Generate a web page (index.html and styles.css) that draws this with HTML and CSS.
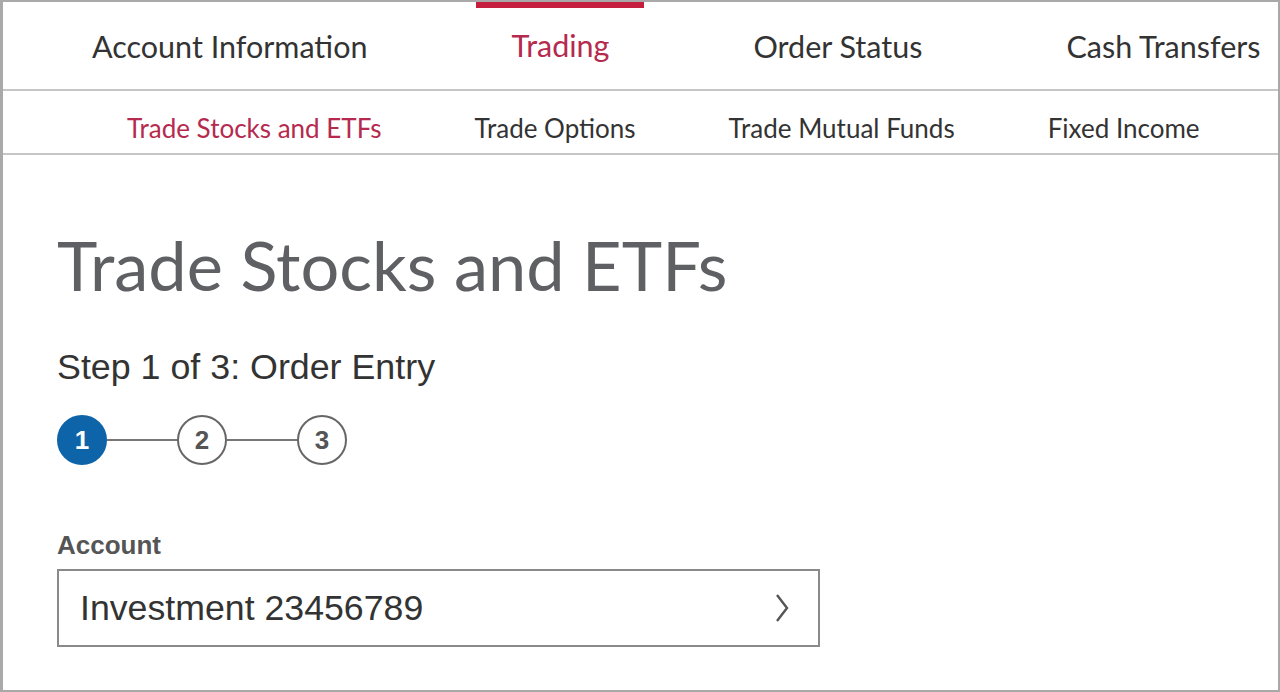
FILE: index.html
```html
<!DOCTYPE html>
<html lang="en">
<head>
    <meta charset="UTF-8">
    <meta name="viewport" content="width=device-width, initial-scale=1.0">
    <title>Trade Stocks and ETFs</title>
    <link rel="stylesheet" href="styles.css">
</head>
<body>
    <div class="frame">
        <nav class="main-nav">
            <a class="tab">Account Information</a>
            <a class="tab active">Trading</a>
            <a class="tab">Order Status</a>
            <a class="tab">Cash Transfers</a>
        </nav>
        <nav class="sub-nav">
            <a class="sub active">Trade Stocks and ETFs</a>
            <a class="sub">Trade Options</a>
            <a class="sub">Trade Mutual Funds</a>
            <a class="sub">Fixed Income</a>
        </nav>

        <main class="content">
            <h1>Trade Stocks and ETFs</h1>
            <p class="step-title">Step 1 of 3: Order Entry</p>

            <div class="stepper">
                <span class="dot current">1</span>
                <span class="link"></span>
                <span class="dot">2</span>
                <span class="link"></span>
                <span class="dot">3</span>
            </div>

            <label class="field-label">Account</label>
            <div class="select">
                <span>Investment 23456789</span>
                <svg class="chevron" width="16" height="30" viewBox="0 0 16 30">
                    <path d="M3 2 L13 15 L3 28" fill="none" stroke="#555" stroke-width="2.4"/>
                </svg>
            </div>
        </main>
    </div>
</body>
</html>
```

FILE: styles.css
```css
* {
    box-sizing: border-box;
}
body {
    margin: 0;
    background: #fff;
}
.frame {
    height: 692px;
    border: 2px solid #a9a9a9;
    border-left-width: 3px;
    overflow: hidden;
    background: #fff;
}

/* top tabs */
.main-nav {
    display: flex;
    gap: 74px;
    padding-left: 54px;
    height: 89px;
    border-bottom: 2px solid #c6c6c6;
    font-family: Lato, "Open Sans", sans-serif;
    font-size: 30.5px;
    white-space: nowrap;
}
.tab {
    padding: 20px 35px 0;
    color: #333;
    border-top: 6px solid transparent;
}
.tab.active {
    color: #b52a4e;
    border-top-color: #c41f3e;
    padding-top: 19px;
}

/* second row */
.sub-nav {
    display: flex;
    gap: 93px;
    padding-left: 124px;
    height: 64px;
    padding-top: 11px;
    align-items: center;
    border-bottom: 2px solid #c6c6c6;
    font-family: Lato, "Open Sans", sans-serif;
    font-size: 26px;
    white-space: nowrap;
}
.sub {
    color: #333;
}
.sub.active {
    color: #b52a4e;
}

.content {
    padding: 0 0 0 54px;
    font-family: "Liberation Sans", Arial, sans-serif;
}
h1 {
    margin: 68px 0 0;
    font-family: Lato, "Open Sans", sans-serif;
    font-weight: normal;
    font-size: 68.5px;
    line-height: 84px;
    color: #5f6063;
}
.step-title {
    margin: 40px 0 0;
    font-size: 35.8px;
    line-height: 40px;
    color: #333;
}

.stepper {
    display: flex;
    align-items: center;
    margin-top: 28px;
}
.dot {
    width: 50px;
    height: 50px;
    border-radius: 50%;
    border: 2px solid #666;
    display: flex;
    align-items: center;
    justify-content: center;
    font-weight: bold;
    font-size: 26px;
    color: #555;
}
.dot.current {
    background: #0e64a8;
    border-color: #0e64a8;
    color: #fff;
}
.link {
    width: 70px;
    height: 2px;
    background: #777;
}

.field-label {
    display: block;
    margin-top: 65px;
    font-weight: bold;
    font-size: 26px;
    color: #555;
}
.select {
    display: flex;
    align-items: center;
    justify-content: space-between;
    width: 763px;
    height: 78px;
    margin-top: 8px;
    padding: 0 28px 0 21px;
    border: 2px solid #8a8a8a;
    font-size: 35.7px;
    color: #333;
}
```
